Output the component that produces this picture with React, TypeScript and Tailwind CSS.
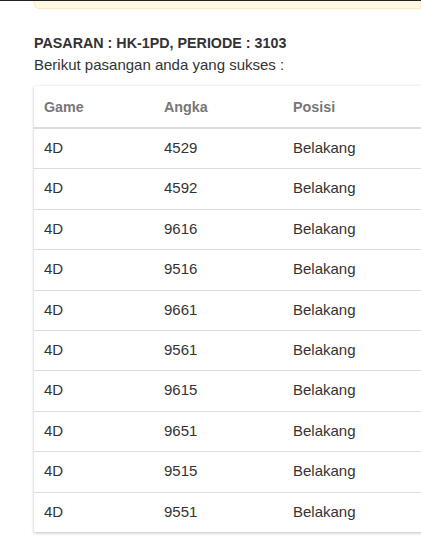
const rows = [
  ["4D", "4529", "Belakang"],
  ["4D", "4592", "Belakang"],
  ["4D", "9616", "Belakang"],
  ["4D", "9516", "Belakang"],
  ["4D", "9661", "Belakang"],
  ["4D", "9561", "Belakang"],
  ["4D", "9615", "Belakang"],
  ["4D", "9651", "Belakang"],
  ["4D", "9515", "Belakang"],
  ["4D", "9551", "Belakang"],
];

export default function App() {
  return (
    <div className="w-[421px] h-[536px] overflow-hidden bg-white text-[15px] text-[#333] font-['Liberation_Sans',Arial,sans-serif]">
      <div className="h-px bg-[#222]" />
      <div className="pl-[34px]">
        <div className="h-[8px] bg-[#fff8e3] border border-t-0 border-[#faebc3] rounded-bl-[5px]" />
        <h4 className="mt-[24px] font-bold text-[14.3px] leading-[20px]">
          PASARAN : HK-1PD, PERIODE : 3103
        </h4>
        <p className="leading-[20px] mt-[2px]">Berikut pasangan anda yang sukses :</p>
        <div className="mt-[11px] w-[420px] bg-white shadow-[0_1px_3px_rgba(0,0,0,0.25)]">
          <div className="flex border-b-2 border-[#dddddd] font-bold text-[14.3px] text-[#777]">
            <div className="w-[120px] pl-[10px] pt-[11px] pb-[9px] leading-[21px]">Game</div>
            <div className="w-[129px] pl-[10px] pt-[11px] pb-[9px] leading-[21px]">Angka</div>
            <div className="flex-1 pl-[10px] pt-[11px] pb-[9px] leading-[21px]">Posisi</div>
          </div>
          {rows.map((r, i) => (
            <div
              key={i}
              className={"flex " + (i > 0 ? "border-t border-[#dddddd]" : "")}
            >
              <div className="w-[120px] pl-[10px] pt-[9px] pb-[11px] leading-[19.4px]">{r[0]}</div>
              <div className="w-[129px] pl-[10px] pt-[9px] pb-[11px] leading-[19.4px]">{r[1]}</div>
              <div className="flex-1 pl-[10px] pt-[9px] pb-[11px] leading-[19.4px]">{r[2]}</div>
            </div>
          ))}
        </div>
      </div>
    </div>
  );
}
